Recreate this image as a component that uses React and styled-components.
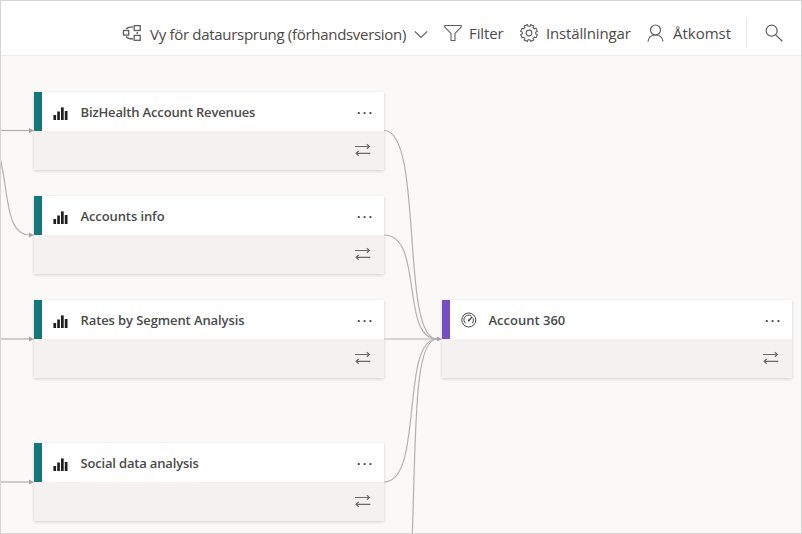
import React from "react";
import styled, { createGlobalStyle } from "styled-components";

const GlobalStyle = createGlobalStyle`
  * { box-sizing: border-box; }
  body { margin: 0; background: #fff; }
`;

const Frame = styled.div`
  display: flex;
  flex-direction: column;
  width: 802px;
  height: 534px;
  overflow: hidden;
  border: 1px solid #d4d4d4;
  background: #fff;
  font-family: "Open Sans", "Noto Sans", sans-serif;
  color: #4c4a48;
`;

const Toolbar = styled.header`
  display: flex;
  align-items: center;
  flex: none;
  height: 55px;
  padding: 10px 18px 0 121px;
  border-bottom: 1px solid #edebe9;
`;

const ToolButton = styled.div`
  display: flex;
  align-items: center;
  flex: none;
  width: ${(p) => p.$width}px;
  margin-right: ${(p) => p.$after || 0}px;

  svg { flex: none; display: block; }
`;

const ToolLabel = styled.span`
  flex: 1;
  padding-top: ${(p) => p.$drop || 0}px;
  margin-left: ${(p) => p.$gap}px;
  font-size: 15px;
  line-height: 22px;
  letter-spacing: ${(p) => p.$tracking}px;
  white-space: nowrap;
`;

const Divider = styled.div`
  width: 1px;
  height: 30px;
  margin-right: 18px;
  background: #e6e6e6;
`;

const Canvas = styled.main`
  position: relative;
  flex: 1;
  background: #faf9f8;
  overflow: hidden;
`;

const Edges = styled.svg`
  position: absolute;
  inset: 0;
`;

const NodeCard = styled.article`
  position: absolute;
  left: ${(p) => p.$x}px;
  top: ${(p) => p.$y}px;
  width: 350px;
  height: 78px;
  background: #f3f2f1;
  box-shadow: 0 1px 3px rgba(0, 0, 0, 0.17);
`;

const NodeHeader = styled.div`
  display: flex;
  align-items: center;
  height: 39px;
  padding-right: 11px;
  border-left: 8px solid ${(p) => p.$accent};
  background: #fff;

  svg { flex: none; display: block; }
`;

const NodeIcon = styled.span`
  width: 38.5px;
  padding-left: 11px;
`;

const NodeTitle = styled.span`
  flex: 1;
  font-size: 13px;
  font-weight: 600;
  line-height: 18px;
  letter-spacing: ${(p) => p.$tracking}px;
  white-space: nowrap;
`;

const NodeFooter = styled.div`
  display: flex;
  align-items: center;
  justify-content: flex-end;
  height: 38px;
  padding-right: 13px;
`;

const line = { fill: "none", stroke: "#605e5c", strokeWidth: 1.1 };

const LineageIcon = () => (
  <svg width="20" height="18" viewBox="0 0 20 18" {...line} strokeWidth="1.3">
    <rect x="1.5" y="6.5" width="5.2" height="4.6" />
    <rect x="12.2" y="1.6" width="6" height="4.9" />
    <rect x="12.2" y="11.4" width="6" height="4.9" />
    <path d="M4 5C5.5 3.5 8 2.8 11 2.8M4 12.5C5.5 14.4 8 15 11 15M15.2 8v2" />
  </svg>
);

const ChevronIcon = () => (
  <svg width="14" height="18" viewBox="0 0 14 18" {...line}>
    <path d="M.8 7.3 7 13.5l6.2-6.2" />
  </svg>
);

const FilterIcon = () => (
  <svg width="18" height="18" viewBox="0 0 18 18" {...line}>
    <path d="M.8 1.5h16.4v1.6L11 9.4v7.1H7V9.4L.8 3.1z" />
  </svg>
);

const gearPath = (() => {
  const points = [];
  for (let i = 0; i < 8; i += 1) {
    const base = ((i + 0.5) * Math.PI) / 4;
    [[-0.24, 6.8], [-0.22, 8.5], [0.22, 8.5], [0.24, 6.8]].forEach(([a, r]) => {
      const x = 9 + r * Math.sin(base + a);
      const y = 9 - r * Math.cos(base + a);
      points.push(`${x.toFixed(2)} ${y.toFixed(2)}`);
    });
  }
  return `M${points.join("L")}Z`;
})();

const GearIcon = () => (
  <svg width="18" height="18" viewBox="0 0 18 18" {...line} strokeLinejoin="round">
    <path d={gearPath} />
    <circle cx="9" cy="9" r="2.9" />
  </svg>
);

const PersonIcon = () => (
  <svg width="17" height="18" viewBox="0 0 17 18" {...line} strokeWidth="1.2">
    <circle cx="8.5" cy="6" r="5" />
    <path d="M1 17.5C1.5 13.5 4.3 11 8.5 11s7 2.5 7.5 6.5" />
  </svg>
);

const SearchIcon = () => (
  <svg width="19" height="18" viewBox="0 0 19 18" {...line} strokeWidth="1.3">
    <circle cx="7" cy="6.6" r="5.8" />
    <path d="m11 10.7 7.2 7" />
  </svg>
);

const BarsIcon = () => (
  <svg width="15" height="13" viewBox="0 0 15 13" fill="#201f1e" transform="translate(0 2)">
    <rect x="0.4" y="8" width="2.7" height="5" />
    <rect x="4.2" y="4.5" width="2.7" height="8.5" />
    <rect x="8" y="0.4" width="2.7" height="12.6" />
    <rect x="11.8" y="4" width="2.7" height="9" />
  </svg>
);

const GaugeIcon = () => (
  <svg width="16" height="16" viewBox="0 0 16 16" fill="none" stroke="#484644">
    <circle cx="7.8" cy="8" r="7" />
    <path d="M4.8 11.4A4.6 4.6 0 0 1 10.3 4M12 6.3a4.6 4.6 0 0 1-.8 5.1" />
    <path d="M8 8.3 11.3 4.8" strokeWidth="1.3" />
    <circle cx="7.7" cy="8.6" r="1" fill="#484644" stroke="none" />
  </svg>
);

const MoreIcon = () => (
  <svg width="16" height="4" viewBox="0 0 16 4" fill="#484644" transform="translate(0 1)">
    <rect x="0.8" y="1.1" width="1.9" height="1.9" />
    <rect x="6.6" y="1.1" width="1.9" height="1.9" />
    <rect x="12.5" y="1.1" width="1.9" height="1.9" />
  </svg>
);

const SwapIcon = () => (
  <svg width="17" height="14" viewBox="0 0 17 14" fill="none" stroke="#6b6967" strokeWidth="1.2">
    <path d="M1 3.5h14.5M12.8 1.1l2.6 2.4-2.6 2.4M16.3 10.3H2M4.7 7.9 2.1 10.3l2.6 2.4" />
  </svg>
);

const TEAL = "#16777a";
const PURPLE = "#744ec2";

const nodes = [
  { title: "BizHealth Account Revenues", x: 33, y: 36, tracking: -0.15, accent: TEAL, icon: BarsIcon },
  { title: "Accounts info", x: 33, y: 140, tracking: -0.1, accent: TEAL, icon: BarsIcon },
  { title: "Rates by Segment Analysis", x: 33, y: 244, tracking: -0.1, accent: TEAL, icon: BarsIcon },
  { title: "Social data analysis", x: 33, y: 387, tracking: -0.17, accent: TEAL, icon: BarsIcon },
  { title: "Account 360", x: 441, y: 244, tracking: 0, accent: PURPLE, icon: GaugeIcon },
];

const edges = [
  "M0 130.5H30",
  "M0 158C9 192 5 235 30 235",
  "M0 339H30",
  "M0 482H30",
  "M384 130.5C424 130.5 400 339 437 339",
  "M384 235C424 235 400 339 437 339",
  "M384 339H437",
  "M384 482C424 482 400 339 437 339",
  "M412.3 534C416 430 414 339 437 339",
];

const arrows = [[34, 130.5], [34, 235], [34, 339], [34, 482], [442, 339]];

function LineageNode({ title, x, y, tracking, accent, icon: Icon }) {
  return (
    <NodeCard $x={x} $y={y}>
      <NodeHeader $accent={accent}>
        <NodeIcon><Icon /></NodeIcon>
        <NodeTitle $tracking={tracking}>{title}</NodeTitle>
        <MoreIcon />
      </NodeHeader>
      <NodeFooter><SwapIcon /></NodeFooter>
    </NodeCard>
  );
}

export default function App() {
  return (
    <Frame>
      <GlobalStyle />
      <Toolbar>
        <ToolButton $width={306} $after={16}>
          <LineageIcon />
          <ToolLabel $gap={8} $tracking={-0.3} $drop={2}>Vy för dataursprung (förhandsversion)</ToolLabel>
          <ChevronIcon />
        </ToolButton>
        <ToolButton $width={76}>
          <FilterIcon />
          <ToolLabel $gap={7} $tracking={-0.1}>Filter</ToolLabel>
        </ToolButton>
        <ToolButton $width={127}>
          <GearIcon />
          <ToolLabel $gap={8} $tracking={-0.15}>Inställningar</ToolLabel>
        </ToolButton>
        <ToolButton $width={99}>
          <PersonIcon />
          <ToolLabel $gap={9} $tracking={0}>Åtkomst</ToolLabel>
        </ToolButton>
        <Divider />
        <SearchIcon />
      </Toolbar>
      <Canvas>
        {nodes.map((node) => <LineageNode key={node.title} {...node} />)}
        <Edges width="800" height="477" viewBox="1 56 800 477">
          {edges.map((d) => <path key={d} d={d} fill="none" stroke="#b3b0ad" strokeWidth="1.2" />)}
          {arrows.map(([x, y]) => (
            <path key={`${x}-${y}`} d={`M${x} ${y}l-5-2.6v5.2z`} fill="#a6a4a2" />
          ))}
        </Edges>
      </Canvas>
    </Frame>
  );
}
